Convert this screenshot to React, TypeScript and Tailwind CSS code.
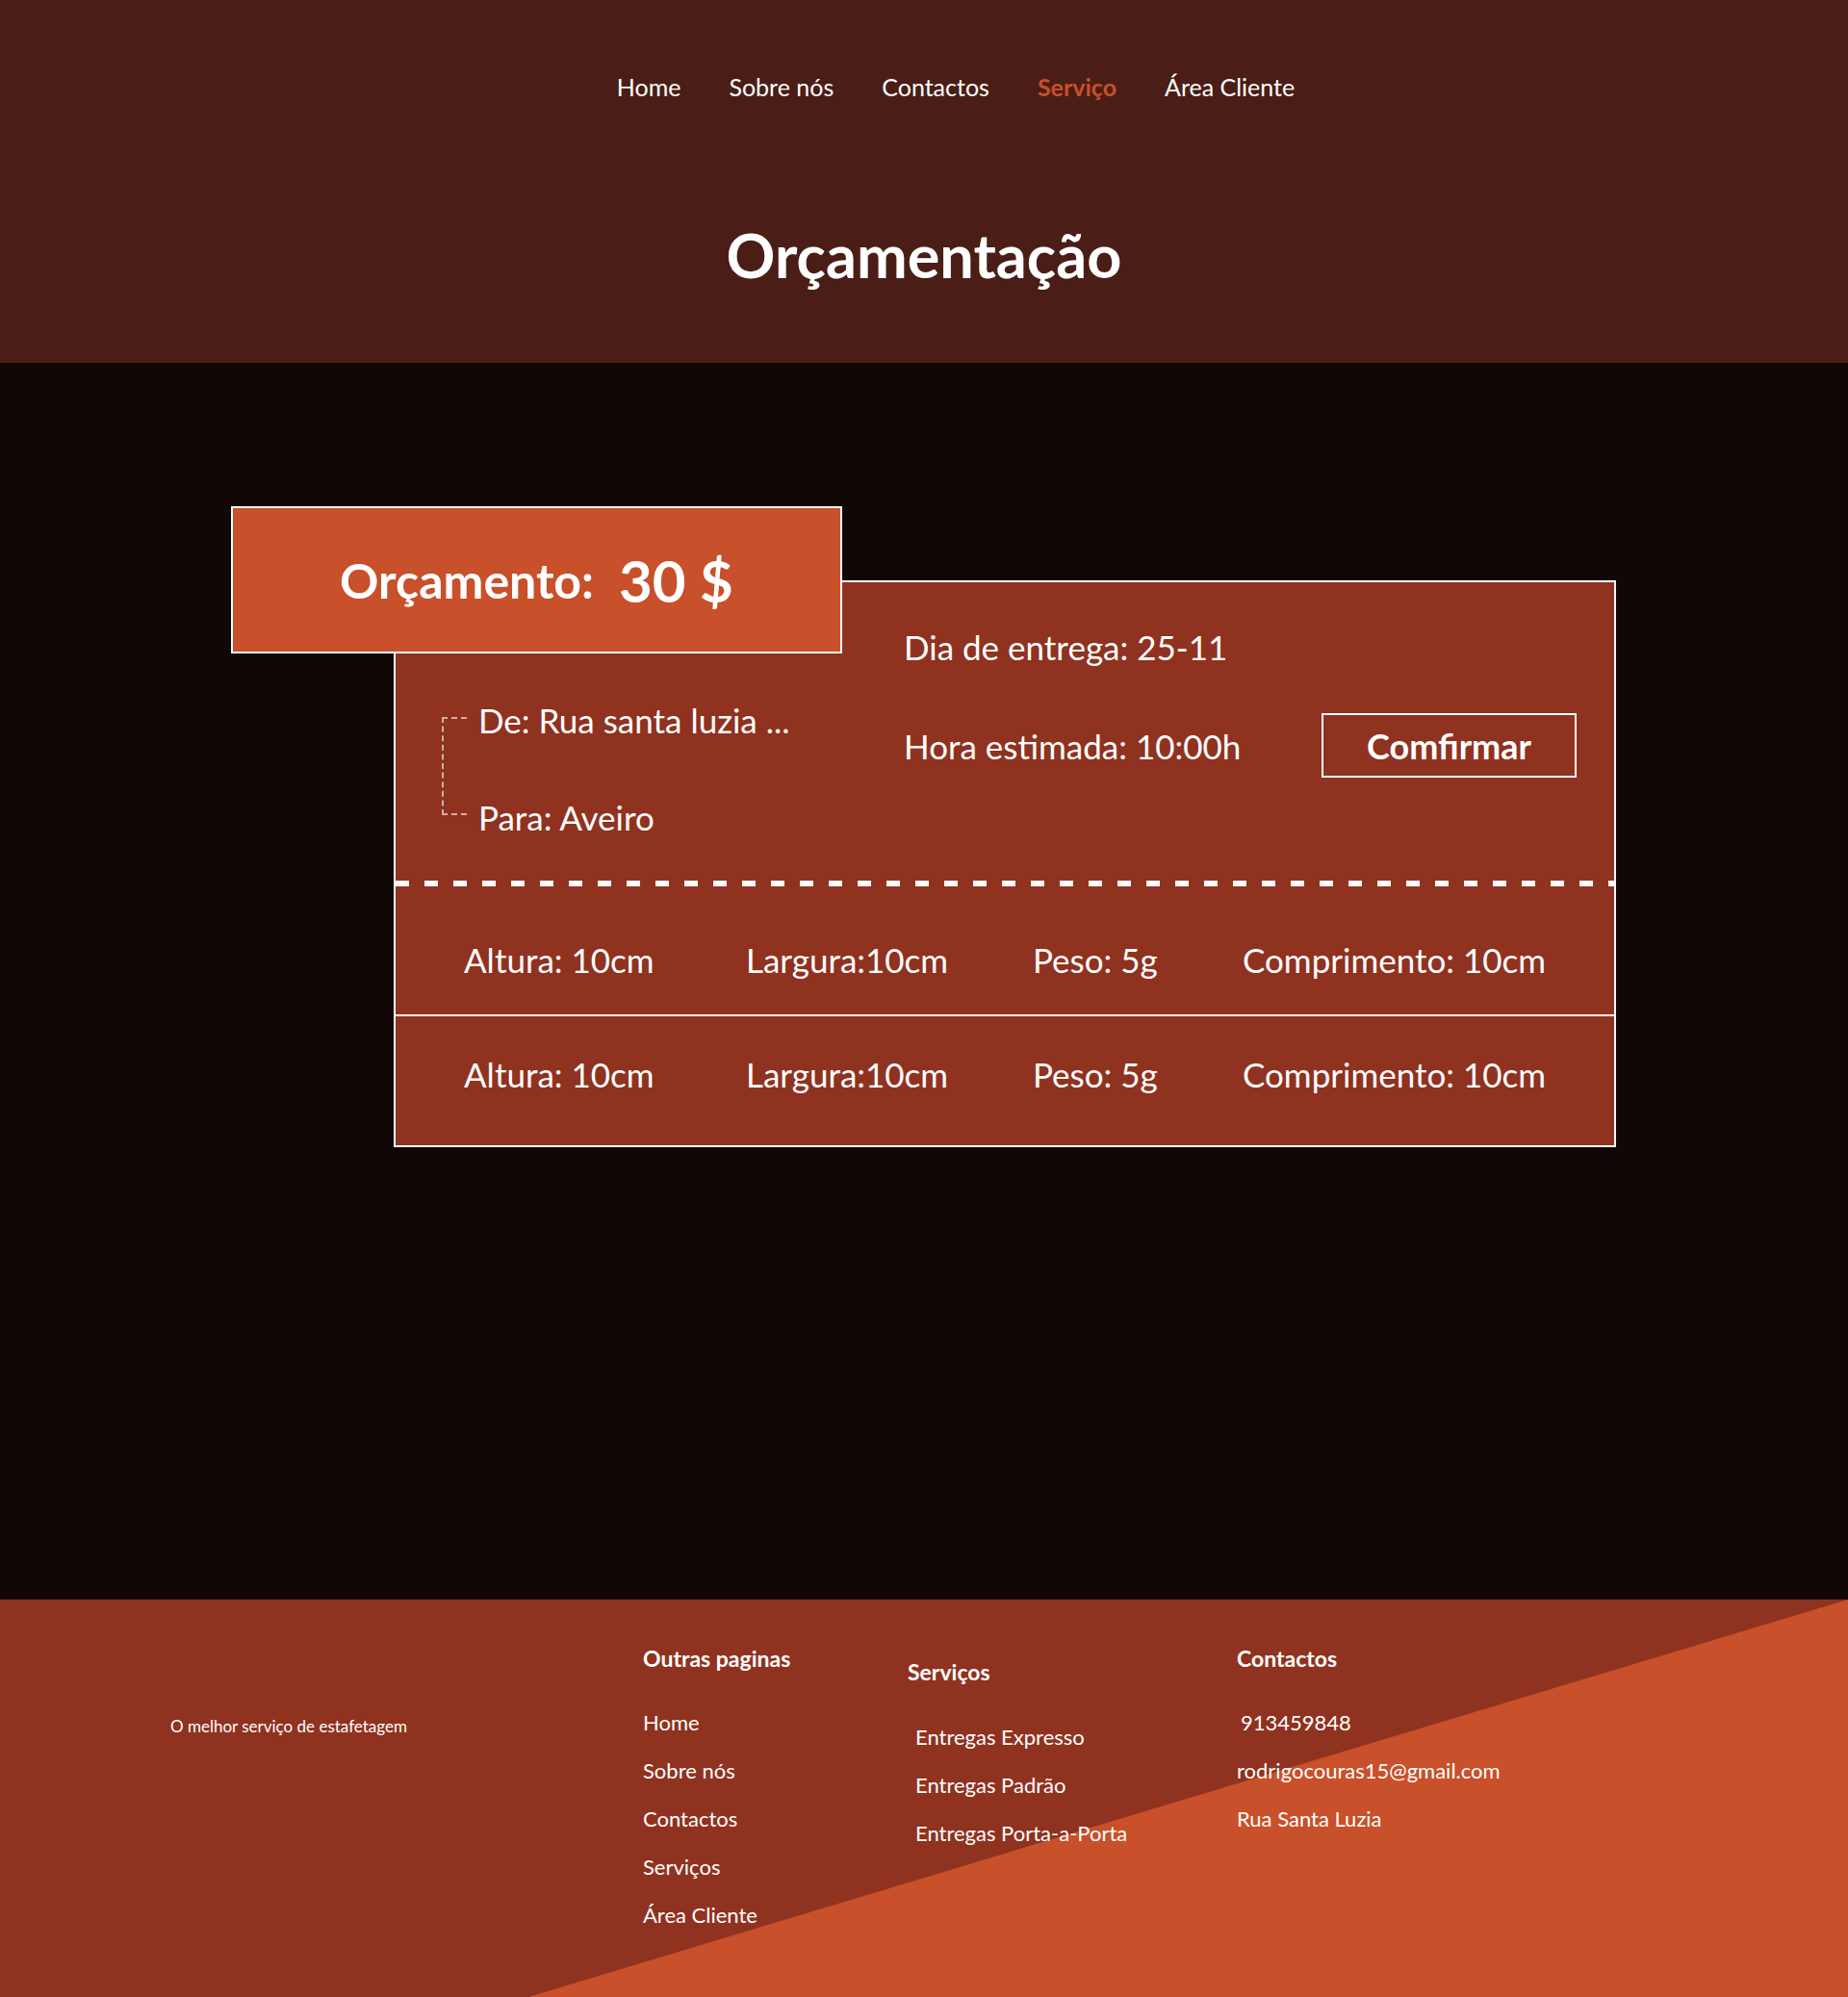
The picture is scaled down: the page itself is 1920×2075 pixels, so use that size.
import React from "react";

const navLinks = ["Home", "Sobre nós", "Contactos", "Serviço", "Área Cliente"];

const medidas = [
  { altura: "Altura: 10cm", largura: "Largura:10cm", peso: "Peso: 5g", comprimento: "Comprimento: 10cm" },
  { altura: "Altura: 10cm", largura: "Largura:10cm", peso: "Peso: 5g", comprimento: "Comprimento: 10cm" },
];

const outrasPaginas = ["Home", "Sobre nós", "Contactos", "Serviços", "Área Cliente"];
const servicos = ["Entregas Expresso", "Entregas Padrão", "Entregas Porta-a-Porta"];

export default function App() {
  return (
    <div className="min-h-screen bg-[#120707] font-['Lato',sans-serif] text-white">
      {/* cabeçalho */}
      <header className="h-[377px] bg-[#4a1e16] flex flex-col items-center">
        <nav className="mt-[75px] pl-[66px]">
          <ul className="flex gap-[50px] text-[25px] leading-[30px]">
            {navLinks.map((link) => (
              <li key={link}>
                <a
                  href="#"
                  className={link === "Serviço" ? "font-bold text-[#c8502a]" : "text-white"}
                >
                  {link}
                </a>
              </li>
            ))}
          </ul>
        </nav>
        <h1 className="mt-[122px] text-[63px] leading-[76px] font-bold">Orçamentação</h1>
      </header>

      {/* orçamento */}
      <main className="h-[1285px] pt-[149px]">
        <div className="relative ml-[240px] w-[1439px] pt-[77px]">
          <div className="absolute left-0 top-0 z-10 w-[635px] h-[153px] bg-[#c8502a] border-2 border-white flex items-center justify-center gap-[26px] font-bold">
            <span className="text-[50px] leading-[60px]">Orçamento:</span>
            <span className="text-[60px] leading-[70px]">30 $</span>
          </div>

          <div className="ml-[169px] w-[1270px] border-2 border-white bg-[#8f3220]">
            <div className="h-[310px] flex pl-[48px] pr-[39px] text-[35px] leading-[44px]">
              <div className="w-[480px] pt-[121px] flex items-start">
                <div className="mt-[19px] h-[102px] w-[26px] border-l-2 border-y-2 border-dashed border-white/60" />
                <div className="ml-[12px] flex flex-col gap-[57px]">
                  <span>De: Rua santa luzia ...</span>
                  <span>Para: Aveiro</span>
                </div>
              </div>
              <div className="flex-1 pt-[45px] flex flex-col gap-[47px]">
                <span>Dia de entrega: 25-11</span>
                <div className="flex items-center justify-between">
                  <span>Hora estimada: 10:00h</span>
                  <button className="w-[265px] h-[67px] border-2 border-white text-[36px] leading-[42px] font-bold">
                    Comfirmar
                  </button>
                </div>
              </div>
            </div>

            <div className="h-[6px] bg-[repeating-linear-gradient(90deg,#ffffff_0px,#ffffff_14px,transparent_14px,transparent_30px)]" />

            {medidas.map((m, i) => (
              <div
                key={i}
                className={
                  i === 0
                    ? "h-[133px] pt-[54px] pl-[71px] grid grid-cols-[293px_298px_218px_1fr] text-[35px] leading-[44px]"
                    : "h-[136px] pt-[38px] pl-[71px] border-t-2 border-white grid grid-cols-[293px_298px_218px_1fr] text-[35px] leading-[44px]"
                }
              >
                <span>{m.altura}</span>
                <span>{m.largura}</span>
                <span>{m.peso}</span>
                <span>{m.comprimento}</span>
              </div>
            ))}
          </div>
        </div>
      </main>

      {/* rodapé */}
      <footer className="relative h-[413px] bg-[#8f3220] overflow-hidden">
        <svg
          className="absolute inset-0 w-full h-full"
          viewBox="0 0 1920 413"
          preserveAspectRatio="none"
        >
          <polygon points="549,413 1920,0 1920,413" fill="#c8502a" />
        </svg>
        <div className="relative flex">
          <p className="ml-[177px] mt-[120px] w-[491px] text-[17px] leading-[24px]">
            O melhor serviço de estafetagem
          </p>
          <div className="w-[275px] pt-[46px] flex flex-col">
            <h4 className="text-[23px] leading-[30px] font-bold">Outras paginas</h4>
            <ul className="mt-[37px] flex flex-col gap-[20px] text-[22px] leading-[30px]">
              {outrasPaginas.map((p) => (
                <li key={p}>{p}</li>
              ))}
            </ul>
          </div>
          <div className="w-[342px] pt-[60px] flex flex-col">
            <h4 className="text-[23px] leading-[30px] font-bold">Serviços</h4>
            <ul className="mt-[38px] pl-[8px] flex flex-col gap-[20px] text-[22px] leading-[30px]">
              {servicos.map((s) => (
                <li key={s}>{s}</li>
              ))}
            </ul>
          </div>
          <div className="pt-[46px] flex flex-col">
            <h4 className="text-[23px] leading-[30px] font-bold">Contactos</h4>
            <ul className="mt-[37px] flex flex-col gap-[20px] text-[22px] leading-[30px]">
              <li className="pl-[4px]">913459848</li>
              <li>rodrigocouras15@gmail.com</li>
              <li>Rua Santa Luzia</li>
            </ul>
          </div>
        </div>
      </footer>
    </div>
  );
}
